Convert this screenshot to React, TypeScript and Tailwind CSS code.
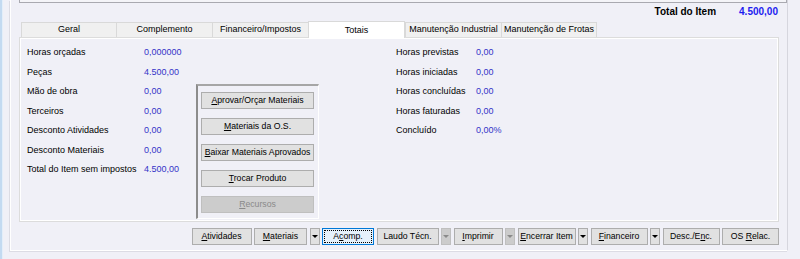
import React from "react";

const leftRows = [
  { label: "Horas orçadas", value: "0,000000" },
  { label: "Peças", value: "4.500,00" },
  { label: "Mão de obra", value: "0,00" },
  { label: "Terceiros", value: "0,00" },
  { label: "Desconto Atividades", value: "0,00" },
  { label: "Desconto Materiais", value: "0,00" },
  { label: "Total do Item sem impostos", value: "4.500,00" },
];

const rightRows = [
  { label: "Horas previstas", value: "0,00" },
  { label: "Horas iniciadas", value: "0,00" },
  { label: "Horas concluídas", value: "0,00" },
  { label: "Horas faturadas", value: "0,00" },
  { label: "Concluído", value: "0,00%" },
];

const tabs = [
  { label: "Geral", w: "w-[96px]" },
  { label: "Complemento", w: "w-[97px]" },
  { label: "Financeiro/Impostos", w: "w-[97px]" },
  { label: "Totais", w: "w-[97px]", active: true },
  { label: "Manutenção Industrial", w: "w-[97px]" },
  { label: "Manutenção de Frotas", w: "w-[96px]" },
];

// label with an underlined mnemonic letter
function Mn({ pre = "", u, post = "" }: { pre?: string; u: string; post?: string }) {
  return (
    <span>
      {pre}
      <span className="underline underline-offset-[1px]">{u}</span>
      {post}
    </span>
  );
}

function GroupButton({ children, disabled }: { children: React.ReactNode; disabled?: boolean }) {
  return (
    <div
      className={
        disabled
          ? "h-[17px] w-full flex items-center justify-center bg-[#cccccc] border border-[#bfbfbf] text-[#8a8a8a]"
          : "h-[17px] w-full flex items-center justify-center bg-[#e1e1e1] border border-[#adadad] text-black"
      }
    >
      {children}
    </div>
  );
}

function Btn({ children, w, focused }: { children: React.ReactNode; w: string; focused?: boolean }) {
  if (focused) {
    return (
      <div className={`${w} h-[17px] shrink-0 bg-[#e5f1fb] border border-[#0078d7] p-[1px]`}>
        <div className="h-full w-full border border-dotted border-black flex items-center justify-center">
          {children}
        </div>
      </div>
    );
  }
  return (
    <div className={`${w} h-[17px] shrink-0 flex items-center justify-center bg-[#e1e1e1] border border-[#adadad]`}>
      {children}
    </div>
  );
}

function Arrow({ dim }: { dim?: boolean }) {
  return (
    <div
      className={
        dim
          ? "w-[10px] h-[17px] shrink-0 flex items-center justify-center bg-[#cccccc] border border-[#bfbfbf]"
          : "w-[10px] h-[17px] shrink-0 flex items-center justify-center bg-[#e1e1e1] border border-[#adadad]"
      }
    >
      <svg width="6" height="3" viewBox="0 0 6 3">
        <polygon points="0,0 6,0 3,3" fill={dim ? "#8a8a8a" : "#000"} />
      </svg>
    </div>
  );
}

export default function App() {
  return (
    <div
      className="w-[800px] h-[259px] overflow-hidden bg-[#f0f0f7] flex text-[9px] text-black"
      style={{ fontFamily: '"Liberation Sans", Arial, sans-serif' }}
    >
      <div className="w-[2px] h-full bg-[#c3daf1]" />
      <div className="w-[1px] h-full bg-[#e3eef9]" />

      {/* outer panel */}
      <div className="ml-[7px] w-[778px] h-[251px] border-l border-b border-white border-r border-r-[#d6d6de] shadow-[-1px_1px_0_#dcdce4] flex flex-col pl-[8px]">
        {/* top box edge */}
        <div className="h-[3px] w-[768px] border-x border-b border-[#a9a9b0] bg-[#f4f4f8]" />

        {/* total row */}
        <div className="h-[14px] mt-[1px] flex items-center justify-end pr-[9px] text-[10px] font-bold">
          <span>Total do Item</span>
          <span className="ml-[23px] text-[#1c1cf0]">4.500,00</span>
        </div>

        {/* tabs */}
        <div className="mt-[2px] h-[17px] flex items-end pl-[2px]">
          {tabs.map((t) =>
            t.active ? (
              <div
                key={t.label}
                className={`${t.w} h-[17px] -mb-[1px] z-10 bg-white border-x border-t border-[#d9d9d9] flex items-start justify-center pt-[2px]`}
              >
                {t.label}
              </div>
            ) : (
              <div
                key={t.label}
                className={`${t.w} h-[15px] bg-[#f0f0f0] border-l border-t border-r border-[#d9d9d9] -mr-[1px] flex items-center justify-center`}
              >
                {t.label}
              </div>
            )
          )}
        </div>

        {/* tab content */}
        <div className="w-[760px] h-[185px] border border-[#dcdcdc] shadow-[inset_1px_1px_0_#ffffff,inset_-1px_-1px_0_#ffffff] flex pl-[7px] pt-[5px]">
          <div className="w-[169px] flex flex-col">
            {leftRows.map((r) => (
              <div key={r.label} className="h-[19.5px] flex items-center">
                <span className="w-[117px]">{r.label}</span>
                <span className="text-[#3434c8]">{r.value}</span>
              </div>
            ))}
          </div>

          {/* button group */}
          <div className="mt-[41px] w-[123px] h-[135px] border-l-2 border-t-2 border-l-[#8c8c8c] border-t-[#a6a6a6] border-r border-b border-r-white border-b-white flex flex-col gap-[9px] pl-[3px] pr-[4px] pt-[6px] text-[8.7px]">
            <GroupButton>
              <Mn u="A" post="provar/Orçar Materiais" />
            </GroupButton>
            <GroupButton>
              <Mn u="M" post="ateriais da O.S." />
            </GroupButton>
            <GroupButton>
              <Mn u="B" post="aixar Materiais Aprovados" />
            </GroupButton>
            <GroupButton>
              <Mn u="T" post="rocar Produto" />
            </GroupButton>
            <GroupButton disabled>
              <Mn u="R" post="ecursos" />
            </GroupButton>
          </div>

          <div className="ml-[77px] flex flex-col">
            {rightRows.map((r) => (
              <div key={r.label} className="h-[19.5px] flex items-center">
                <span className="w-[80px]">{r.label}</span>
                <span className="text-[#3434c8]">{r.value}</span>
              </div>
            ))}
          </div>
        </div>

        {/* bottom buttons */}
        <div className="mt-[6px] w-[760px] flex justify-end gap-[2.5px] text-[8.7px]">
          <Btn w="w-[60px]">
            <Mn u="A" post="tividades" />
          </Btn>
          <Btn w="w-[53px]">
            <Mn u="M" post="ateriais" />
          </Btn>
          <Arrow />
          <Btn w="w-[52px]" focused>
            <Mn pre="A" u="c" post="omp." />
          </Btn>
          <Btn w="w-[62px]">Laudo Técn.</Btn>
          <Arrow dim />
          <Btn w="w-[49px]">
            <Mn u="I" post="mprimir" />
          </Btn>
          <Arrow dim />
          <Btn w="w-[58px]">
            <Mn u="E" post="ncerrar Item" />
          </Btn>
          <Arrow />
          <Btn w="w-[57px]">
            <Mn u="F" post="inanceiro" />
          </Btn>
          <Arrow />
          <Btn w="w-[57px]">
            <Mn pre="Desc./E" u="n" post="c." />
          </Btn>
          <Btn w="w-[57px]">
            <Mn pre="OS " u="R" post="elac." />
          </Btn>
        </div>
      </div>
    </div>
  );
}
